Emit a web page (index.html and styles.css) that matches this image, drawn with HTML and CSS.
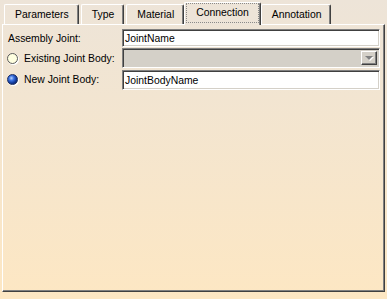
FILE: index.html
```html
<!DOCTYPE html>
<html lang="en">
<head>
    <meta charset="UTF-8">
    <title>Connection</title>
    <link rel="stylesheet" href="styles.css">
</head>
<body>
    <div class="dialog">
        <div class="tabs">
            <div class="tab">Parameters</div>
            <div class="tab">Type</div>
            <div class="tab">Material</div>
            <div class="tab active"><span class="focus">Connection</span></div>
            <div class="tab">Annotation</div>
        </div>
        <div class="panel">
            <div class="form">
                <label class="label">Assembly Joint:</label>
                <div class="field">JointName</div>

                <label class="label radio"><span class="dot"></span>Existing Joint Body:</label>
                <div class="combo">
                    <span class="combo-button"><span class="arrow"></span></span>
                </div>

                <label class="label radio"><span class="dot checked"></span>New Joint Body:</label>
                <div class="field tall">JointBodyName</div>
            </div>
        </div>
    </div>
</body>
</html>
```

FILE: styles.css
```css
html, body {
    margin: 0;
    padding: 0;
}

body {
    width: 387px;
    height: 299px;
    background: linear-gradient(#ede4d8, #fde7c3);
    font-family: 'Liberation Sans', Arial, sans-serif;
    font-size: 10.4px;
    color: #000;
    overflow: hidden;
}

.dialog {
    padding: 2px 2px 0 2px;
}

/* tab strip */
.tabs {
    display: flex;
    align-items: flex-start;
    gap: 2px;
    height: 22px;
    padding-left: 2px;
}

.tab {
    margin-top: 2px;
    height: 19px;
    line-height: 19px;
    padding: 0 9px 0 10px;
    border-left: 1px solid #fff;
    border-top: 1px solid #fff;
    border-right: 1px solid #404040;
    border-radius: 2px 2px 0 0;
    box-shadow: inset -1px 0 #808080;
    white-space: nowrap;
}

.tab.active {
    position: relative;
    z-index: 1;
    margin: 0 -2px;
    height: 22px;
    line-height: 20px;
    padding: 0 2px;
    background: #ede4d8;
}

.tab .focus {
    display: block;
    padding: 0 9px;
    margin-top: 1px;
    height: 18px;
    line-height: 18px;
    outline: 1px dotted #8a8a8a;
}

/* page body */
.panel {
    height: 262px;
    border-left: 1px solid #fff;
    border-top: 1px solid #fff;
    border-right: 1px solid #404040;
    border-bottom: 1px solid #404040;
    box-shadow: inset -1px -1px #808080;
    padding: 4px 5px 0 5px;
}

.form {
    display: grid;
    grid-template-columns: 114px 1fr;
    grid-template-rows: 18px 20px 20px;
    row-gap: 1px;
    margin-right: -1px;
}

.label {
    display: flex;
    align-items: center;
    white-space: nowrap;
}

.radio .dot {
    width: 11px;
    height: 11px;
    margin: 0 6px 0 -1px;
    box-sizing: border-box;
    border-radius: 50%;
    border: 1px solid #5a5a5a;
    background: #ffffe0;
    box-shadow: 1px 1px 0 #fff;
}

.radio .dot.checked {
    border-color: #1b2f66;
    background: radial-gradient(circle at 38% 35%, #b8d4ff 0, #3c72e0 30%, #123a9c 60%, #06143f 100%);
}

.field {
    box-sizing: border-box;
    height: 100%;
    padding: 0 2px;
    display: flex;
    align-items: center;
    background: #fff;
    border: 1px solid;
    border-color: #808080 #fff #fff #808080;
    box-shadow: inset 1px 1px #404040, inset -1px -1px #d4d0c8;
}

.field.tall {
    margin-top: 1px;
}

.combo {
    box-sizing: border-box;
    height: 100%;
    display: flex;
    justify-content: flex-end;
    padding: 2px;
    background: #d4d0c8;
    border: 1px solid;
    border-color: #808080 #fff #fff #808080;
    box-shadow: inset 1px 1px #404040, inset -1px -1px #d4d0c8;
}

.combo-button {
    width: 16px;
    box-sizing: border-box;
    display: flex;
    align-items: center;
    justify-content: center;
    background: #d4d0c8;
    border: 1px solid;
    border-color: #fff #404040 #404040 #fff;
    box-shadow: inset -1px -1px #808080;
}

.arrow {
    width: 0;
    height: 0;
    border-left: 4px solid transparent;
    border-right: 4px solid transparent;
    border-top: 4px solid #808080;
    filter: drop-shadow(1px 1px 0 #fff);
}
```
